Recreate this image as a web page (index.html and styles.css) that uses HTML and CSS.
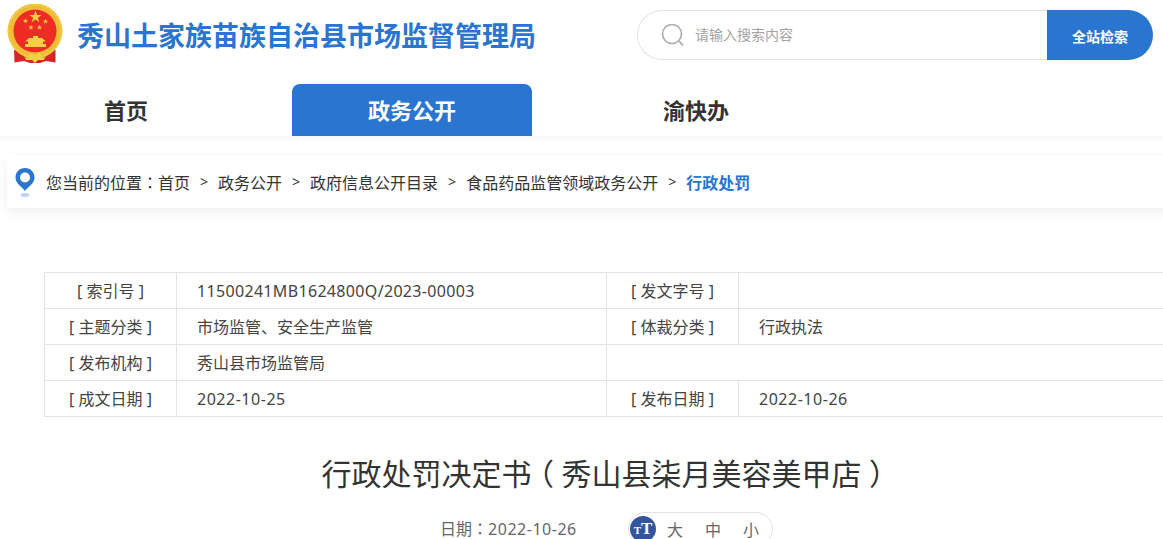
FILE: index.html
```html
<!DOCTYPE html>
<html lang="zh-CN">
<head>
<meta charset="utf-8">
<title>行政处罚决定书</title>
<link rel="stylesheet" href="styles.css">
</head>
<body>
<div class="page">
  <header class="top">
    <div class="brand">
      <svg class="emblem" viewBox="6 4 58 60" width="58" height="60" aria-hidden="true">
        <defs>
          <path id="star" d="M0 -1 L.235 -.324 L.951 -.309 L.38 .124 L.588 .809 L0 .4 L-.588 .809 L-.38 .124 L-.951 -.309 L-.235 -.324 Z"/>
        </defs>
        <path d="M14 50 L14.500 62.500 L24 61 L30 63 L40 63 L46 61 L55.500 62.500 L55.500 50 Z" fill="#d8232a"/>
        <circle cx="35" cy="31" r="27.500" fill="#efbc35"/>
        <circle cx="35" cy="31" r="26.300" fill="none" stroke="#f7d868" stroke-width="1.300" stroke-dasharray="1.500 1.500"/>
        <circle cx="35" cy="31" r="21.500" fill="#ee2b24"/>
        <use href="#star" fill="#f6cf45" transform="translate(35.500 17) scale(6.500)"/>
        <use href="#star" fill="#f6cf45" transform="translate(25.500 21) scale(2.800)"/>
        <use href="#star" fill="#f6cf45" transform="translate(45.500 21.500) scale(2.800)"/>
        <use href="#star" fill="#f6cf45" transform="translate(31 27.500) scale(2.800)"/>
        <use href="#star" fill="#f6cf45" transform="translate(39.500 27.500) scale(2.800)"/>
        <path d="M33 36 H38 V38 H42 L46 41.500 H43 V44 H46 V47 H25 V44 H28 V41.500 H25 L29 38 H33 Z" fill="#f6cf45"/>
        <path d="M16 46 Q35 63 54 46" fill="none" stroke="#efbc35" stroke-width="3"/>
        <path d="M27 58 L30 53 L35 55 L40 53 L43 58 L46 55 L44 60 H38 L35 63 L32 60 H26 L24 55 Z" fill="#f6cf45"/>
      </svg>
      <h1 class="site-title">秀山土家族苗族自治县市场监督管理局</h1>
    </div>
    <form class="search">
      <div class="search-field">
        <svg class="search-icon" viewBox="0 0 24 24" width="24" height="24" aria-hidden="true">
          <circle cx="11" cy="11" r="9.500" fill="none" stroke="#aaa" stroke-width="1.600"/>
          <path d="M18 18 L22 22.500" stroke="#aaa" stroke-width="1.800" fill="none"/>
        </svg>
        <span class="placeholder">请输入搜索内容</span>
      </div>
      <div class="search-btn">全站检索</div>
    </form>
  </header>

  <nav class="nav">
    <a class="nav-item">首页</a>
    <a class="nav-item active">政务公开</a>
    <a class="nav-item">渝快办</a>
  </nav>

  <div class="crumb-wrap">
    <div class="crumbs">
      <svg class="pin" viewBox="0 0 20 32" width="20" height="32" aria-hidden="true">
        <path d="M10 1 C4.500 1 .5 5 .5 10.500 C.5 16.500 6.500 19.500 10 24 C13.500 19.500 19.500 16.500 19.500 10.500 C19.500 5 15.500 1 10 1 Z" fill="#2975cf"/>
        <circle cx="10" cy="10.500" r="5" fill="#fff"/>
        <ellipse cx="10" cy="28" rx="4.500" ry="2" fill="#bcd5ef"/>
      </svg>
      <span class="crumb-text">您当前的位置<span class="cp" lang="zh-TW">：</span>首页</span>
      <span class="sep">&gt;</span><span class="crumb-text">政务公开</span>
      <span class="sep">&gt;</span><span class="crumb-text">政府信息公开目录</span>
      <span class="sep">&gt;</span><span class="crumb-text">食品药品监管领域政务公开</span>
      <span class="sep">&gt;</span><span class="crumb-current">行政处罚</span>
    </div>
  </div>

  <table class="meta">
    <tr><th>[ 索引号 ]</th><td class="wide"><span class="latin">11500241MB1624800Q/2023-00003</span></td><th>[ 发文字号 ]</th><td></td></tr>
    <tr><th>[ 主题分类 ]</th><td class="wide">市场监管、安全生产监管</td><th>[ 体裁分类 ]</th><td>行政执法</td></tr>
    <tr><th>[ 发布机构 ]</th><td class="wide">秀山县市场监管局</td><td colspan="2"></td></tr>
    <tr><th>[ 成文日期 ]</th><td class="wide"><span class="num">2022-10-25</span></td><th>[ 发布日期 ]</th><td><span class="num">2022-10-26</span></td></tr>
  </table>

  <h2 class="doc-title">行政处罚决定书<span class="paren">（</span>秀山县柒月美容美甲店<span class="paren">）</span></h2>

  <div class="doc-info">
    <span class="date">日期<span class="cp" lang="zh-TW">：</span><span class="num">2022-10-26</span></span>
    <div class="font-size">
      <span class="font-icon"><span class="t-small">T</span><span class="t-big">T</span></span>
      <span class="size">大</span><span class="size">中</span><span class="size">小</span>
    </div>
  </div>
</div>
</body>
</html>
```

FILE: styles.css
```css
* { box-sizing: border-box; }
html, body { margin: 0; padding: 0; height: 539px; overflow: hidden; background: #fff; }
body { font-family: "Noto Sans", "Noto Sans CJK SC", sans-serif; color: #333; }
.page { width: 1200px; }
.cp { font-family: "Noto Sans CJK TC", sans-serif; }
.latin { letter-spacing: .33px; }
.num { letter-spacing: .52px; }
.paren { display: inline-block; padding: 0 .25em; font-feature-settings: "halt"; }

.top { display: flex; height: 84px; padding-left: 6px; }
.brand { display: flex; align-items: flex-start; width: 631px; }
.emblem { margin-top: 4px; flex: none; }
.site-title { margin: 16px 0 0 13px; font: bold 27px/38px "Noto Sans CJK SC", sans-serif; color: #2975cf; white-space: nowrap; }

.search { display: flex; width: 516px; height: 50px; margin-top: 10px; }
.search-field { flex: 1; display: flex; align-items: center; padding-left: 23px; border: 1px solid #e2e2e2; border-right: 0; border-radius: 25px 0 0 25px; }
.search-icon { flex: none; }
.placeholder { margin-left: 10px; margin-top: -2px; font: 14px/20px "Noto Sans CJK SC", sans-serif; color: #a3a3a3; }
.search-btn { width: 106px; display: flex; align-items: center; justify-content: center; padding-top: 1px; background: #2975cf; color: #fff; border-radius: 0 25px 25px 0; font: bold 14px/20px "Noto Sans CJK SC", sans-serif; }

.nav { display: flex; height: 52px; padding-left: 6px; box-shadow: 0 3px 5px rgba(0,0,0,.04); position: relative; }
.nav-item { width: 240px; margin-right: 46px; padding-bottom: 3px; display: flex; align-items: center; justify-content: center; font: bold 22px/30px "Noto Sans CJK SC", sans-serif; color: #333; }
.nav-item:last-child { margin-left: -2px; }
.nav-item.active { background: #2975cf; color: #fff; border-radius: 8px 8px 0 0; }

.crumb-wrap { padding: 20px 0 0 7px; }
.crumbs { display: flex; align-items: center; height: 52px; padding-left: 8px; background: #fff; box-shadow: 0 4px 12px rgba(0,0,0,.07); font: 16px/20px "Noto Sans CJK SC", sans-serif; color: #333; }
.pin { flex: none; margin-right: 11px; margin-top: 2px; }
.sep { margin: 0 10px; font-family: "Noto Sans", sans-serif; font-size: 14px; }
.crumb-current { color: #2975cf; font-weight: bold; }

.meta { margin: 64px 0 0 44px; width: 1124px; border-collapse: collapse; table-layout: fixed; font: 16px/20px "Noto Sans", "Noto Sans CJK SC", sans-serif; color: #444; }
.meta th, .meta td { height: 36px; padding: 0; border: 1px solid #e4e4e4; font-weight: normal; }
.meta th { width: 132px; text-align: center; }
.meta td { padding-left: 20px; }
.meta td.wide { width: 430px; }

.doc-title { margin: 25px 0 0; width: 1213px; text-align: center; font: normal 30px/60px "Noto Sans CJK SC", sans-serif; color: #333; }

.doc-info { display: flex; align-items: flex-start; margin-top: 10px; padding-left: 440px; font: 16px/22px "Noto Sans", "Noto Sans CJK SC", sans-serif; color: #666; }
.date { width: 188px; padding-top: 5px; }
.font-size { display: flex; align-items: center; width: 145px; height: 34px; border: 1px solid #e2e2e2; border-radius: 17px; padding-left: 1px; }
.font-icon { flex: none; width: 26px; height: 26px; border-radius: 50%; background: #33549f; color: #fff; display: flex; align-items: baseline; justify-content: center; font-family: "Liberation Serif", serif; font-weight: bold; line-height: 26px; margin-right: 11px; }
.t-small { font-size: 11px; }
.t-big { font-size: 17px; }
.size { flex: none; width: 38px; text-align: left; font-family: "Noto Sans CJK SC", sans-serif; font-size: 16px; }
.size:last-child { width: 16px; }
```
